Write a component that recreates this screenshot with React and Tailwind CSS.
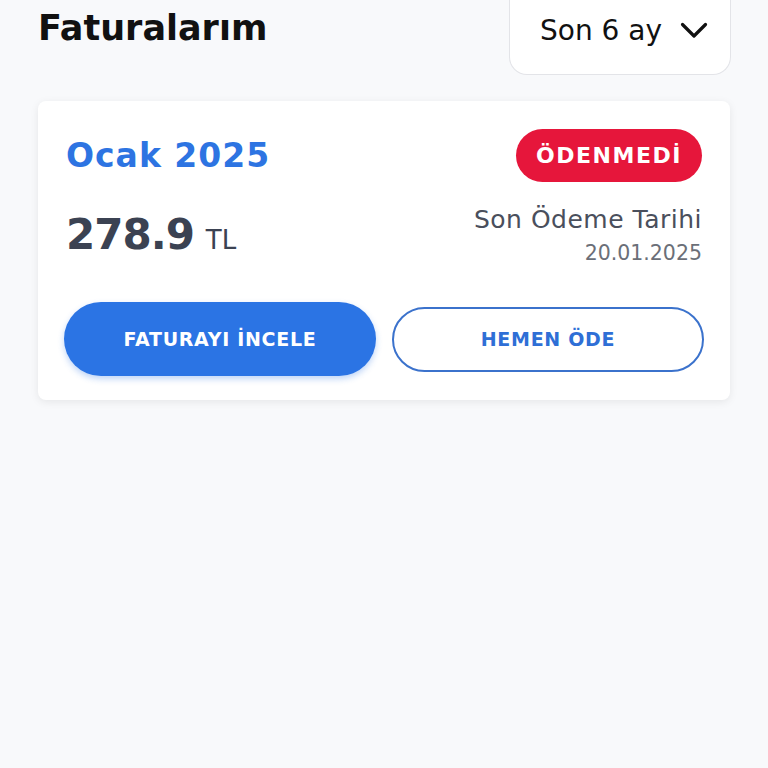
import React from 'react';

const ChevronDown = () => (
    <svg width="28" height="18" viewBox="0 0 28 18" fill="none" stroke="#111" strokeWidth="3.2" strokeLinecap="round" strokeLinejoin="round">
        <path d="M2.5 2.5 L14 14 L25.5 2.5" />
    </svg>
);

const InvoiceCard = () => (
    <div className="mt-[26px] bg-white rounded-[8px] shadow-[0_2px_8px_rgba(0,0,0,0.08)] pt-[28px] pb-[24px] px-[26px]">
        <div className="flex items-center justify-between pl-[2px] pr-[2px]">
            <span className="text-[33px] font-bold text-[#2d74e2] leading-none tracking-[1px]">Ocak 2025</span>
            <span className="h-[53px] w-[186px] rounded-full bg-[#e6163b] text-white font-bold text-[22px] tracking-[1.5px] flex items-center justify-center">ÖDENMEDİ</span>
        </div>
        <div className="flex items-start justify-between mt-[22px] pl-[2px] pr-[2px]">
            <div className="flex items-baseline mt-[10px] text-[#3b4252]">
                <span className="text-[42px] font-bold leading-none tracking-[-1px]">278.9</span>
                <span className="text-[26px] ml-[12px] leading-none">TL</span>
            </div>
            <div className="flex flex-col items-end">
                <span className="text-[25px] text-[#4a4f5c] leading-[32px] tracking-[0.5px]">Son Ödeme Tarihi</span>
                <span className="text-[20.5px] text-[#6b6f78] leading-[30px] mt-[2px]">20.01.2025</span>
            </div>
        </div>
        <div className="grid grid-cols-2 gap-[16px] items-center mt-[34px]">
            <button className="h-[74px] rounded-full bg-[#2b74e4] text-white font-bold text-[19px] tracking-[0.7px] shadow-[0_3px_6px_rgba(43,116,228,0.3)]">FATURAYI İNCELE</button>
            <button className="h-[65px] rounded-full border-2 border-[#3b72cc] text-[#2f6fd6] font-bold text-[19px] tracking-[0.7px] bg-white">HEMEN ÖDE</button>
        </div>
    </div>
);

export default function App() {
    return (
        <div className="min-h-[768px] bg-[#f8f9fb] px-[38px]" style={{ fontFamily: '"DejaVu Sans", sans-serif' }}>
            <div className="flex items-start justify-between">
                <h1 className="mt-[6px] text-[35px] font-bold text-[#111] leading-[44px]">Faturalarım</h1>
                <div className="h-[75px] w-[222px] -mr-[1px] bg-white border border-t-0 border-[#e3e4e8] rounded-b-[18px] flex items-center justify-between pl-[30px] pr-[22px] pb-[12px]">
                    <span className="text-[28px] text-[#111]">Son 6 ay</span>
                    <ChevronDown />
                </div>
            </div>
            <InvoiceCard />
        </div>
    );
}
